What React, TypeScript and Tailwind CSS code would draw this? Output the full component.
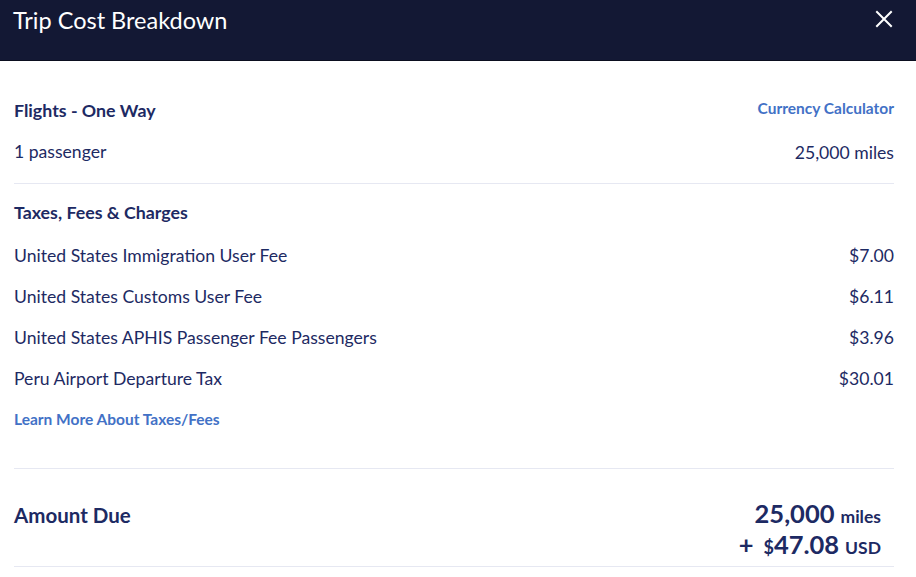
import React from 'react';

const fees = [
    { label: 'United States Immigration User Fee', amount: '$7.00' },
    { label: 'United States Customs User Fee', amount: '$6.11' },
    { label: 'United States APHIS Passenger Fee Passengers', amount: '$3.96' },
    { label: 'Peru Airport Departure Tax', amount: '$30.01' },
];

export default function App() {
    return (
        <div className="w-[916px] h-[577px] bg-white overflow-hidden text-[#1d2a63]" style={{ fontFamily: 'Lato, "Noto Sans", sans-serif' }}>
            {/* Header */}
            <div className="h-[61px] bg-[#131834] border-b border-[#0b0e1f] flex items-start justify-between pl-[13px] pr-[22px]">
                <h1 className="text-white text-[23.5px] leading-none mt-[9px]">Trip Cost Breakdown</h1>
                <button className="mt-[9px] text-white" aria-label="Close">
                    <svg width="20" height="20" viewBox="0 0 20 20" fill="none" stroke="currentColor" strokeWidth="2" strokeLinecap="square">
                        <path d="M3 3 L17 17 M17 3 L3 17" />
                    </svg>
                </button>
            </div>

            <div className="pl-[14px] pr-[22px]">
                {/* Flights */}
                <div className="pt-[38px] pb-[19px] border-b border-[#e6e8f2]">
                    <div className="flex justify-between items-center">
                        <h2 className="text-[17.8px] font-bold leading-[22px]">Flights - One Way</h2>
                        <a className="text-[15.5px] font-bold text-[#4271c6] leading-[22px] -mt-[4px]">Currency Calculator</a>
                    </div>
                    <div className="flex justify-between items-center mt-[18px] text-[17.6px] leading-[22px]">
                        <span>1 passenger</span>
                        <span className="mt-[3px]">25,000 miles</span>
                    </div>
                </div>

                {/* Taxes */}
                <div className="pt-[17px] pb-[38px] border-b border-[#e6e8f2]">
                    <h2 className="text-[17.8px] font-bold leading-[22px]">Taxes, Fees &amp; Charges</h2>
                    <div className="mt-[13px] flex flex-col">
                        {fees.map((f) => (
                            <div key={f.label} className="flex justify-between items-center h-[41px] text-[17.6px]">
                                <span>{f.label}</span>
                                <span>{f.amount}</span>
                            </div>
                        ))}
                    </div>
                    <a className="block mt-[8px] text-[15.5px] font-bold text-[#4271c6] leading-[22px]">Learn More About Taxes/Fees</a>
                </div>

                {/* Amount due */}
                <div className="pt-[33px] pb-[4px] border-b border-[#e6e8f2] flex justify-between items-start">
                    <h2 className="text-[20.5px] font-bold leading-[26px]">Amount Due</h2>
                    <div className="flex flex-col items-end pr-[13px] font-bold -mt-[3px]">
                        <div className="leading-[28px]">
                            <span className="text-[25.5px]">25,000</span>
                            <span className="text-[17.5px] ml-[6px]">miles</span>
                        </div>
                        <div className="leading-[29px] -mt-[1px]">
                            <span className="text-[25.5px] mr-[10px]">+</span>
                            <span className="text-[18px]">$</span>
                            <span className="text-[25.5px]">47.08</span>
                            <span className="text-[17.5px] ml-[6px]">USD</span>
                        </div>
                    </div>
                </div>
            </div>
        </div>
    );
}
